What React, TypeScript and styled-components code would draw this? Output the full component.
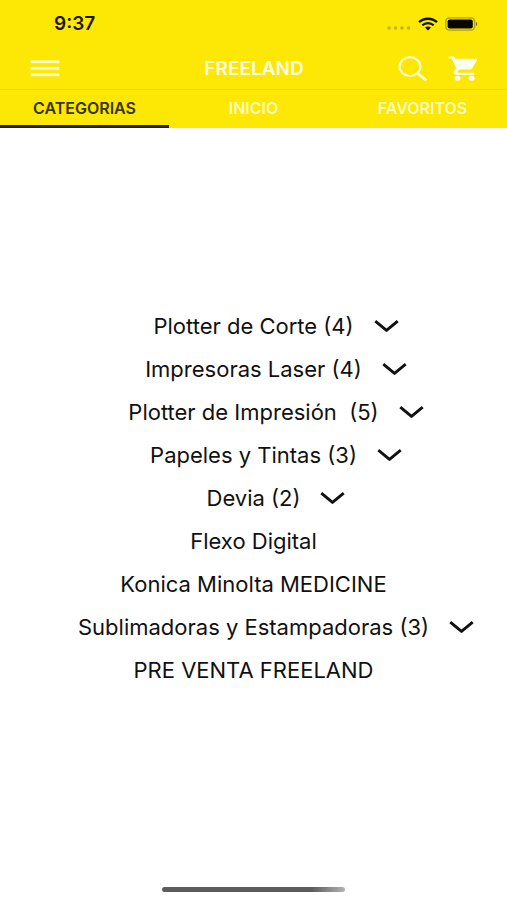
import React, { useState } from "react";
import styled, { createGlobalStyle } from "styled-components";

const GlobalStyle = createGlobalStyle`
  * { box-sizing: border-box; }
  body {
    margin: 0;
    background: #fff;
    font-family: Inter, "Liberation Sans", sans-serif;
    color: #111;
  }
  button {
    border: 0;
    padding: 0;
    background: none;
    font: inherit;
    color: inherit;
    cursor: pointer;
  }
`;

const Screen = styled.div`
  min-height: 100vh;
  display: flex;
  flex-direction: column;
`;

const Header = styled.header`
  background: #fde705;
`;

const StatusBar = styled.div`
  display: flex;
  align-items: center;
  justify-content: space-between;
  height: 48px;
  padding: 0 29px 0 54px;
`;

const Clock = styled.time`
  font-size: 19px;
  font-weight: 600;
  line-height: 24px;
  color: #1a1804;
`;

const StatusIcons = styled.div`
  display: flex;
  align-items: center;
  gap: 7px;
`;

const Toolbar = styled.div`
  display: grid;
  grid-template-columns: 1fr auto 1fr;
  align-items: center;
  height: 42px;
  padding: 0 29px 0 30px;
  border-bottom: 1px solid #ecd508;
`;

const Title = styled.h1`
  margin: 0;
  font-size: 19px;
  font-weight: 600;
  line-height: 24px;
  color: #fffde0;
`;

const IconButton = styled.button`
  display: flex;
  justify-self: start;
`;

const Actions = styled.div`
  display: flex;
  align-items: center;
  justify-content: flex-end;
  gap: 20px;
`;

const Tabs = styled.nav`
  display: grid;
  grid-template-columns: repeat(3, 1fr);
`;

const Tab = styled.button<{ $active: boolean }>`
  height: 38px;
  padding-top: 1px;
  border-bottom: 3px solid ${(p) => (p.$active ? "#22222e" : "transparent")};
  font-size: 16px;
  font-weight: 600;
  line-height: 20px;
  color: ${(p) => (p.$active ? "#38340c" : "#fffbb8")};
`;

const Main = styled.main`
  flex: 1;
  display: flex;
  flex-direction: column;
  justify-content: center;
`;

const CategoryList = styled.ul`
  margin: 0;
  padding: 0;
  list-style: none;
`;

const CategoryRow = styled.li`
  display: grid;
  grid-template-columns: 1fr auto 1fr;
  align-items: center;
  height: 43px;
`;

const CategoryName = styled.button`
  grid-column: 2;
  font-size: 22px;
  line-height: 28px;
  white-space: pre;
`;

const ExpandButton = styled.button`
  display: flex;
  justify-self: start;
  margin-left: 20px;
`;

const Footer = styled.footer`
  display: flex;
  justify-content: center;
  height: 33px;
  padding-top: 20px;
`;

const HomeIndicator = styled.div`
  width: 36%;
  height: 5px;
  border-radius: 3px;
  background: linear-gradient(90deg, #5c5c5c 82%, #b4b4b4);
`;

const SignalDots = () => (
  <svg width="24" height="14" viewBox="0 0 24 14" fill="#c7b40c" aria-hidden="true">
    <circle cx="2" cy="11" r="1.8" />
    <circle cx="8.5" cy="11" r="1.8" />
    <circle cx="15" cy="11" r="1.8" />
    <circle cx="21.5" cy="11" r="1.8" />
  </svg>
);

const Wifi = () => (
  <svg width="20" height="14" viewBox="0 0 20 14" fill="none" stroke="#100f00" aria-hidden="true">
    <path d="M1 5.2C6 .5 14 .5 19 5.2" strokeWidth="2.4" />
    <path d="M4.3 8.3c3.3-3 8.1-3 11.4 0" strokeWidth="2.2" />
    <path d="M7 10.6c1.8-1.6 4.2-1.6 6 0l-3 2.9z" fill="#100f00" stroke="none" />
  </svg>
);

const Battery = () => (
  <svg width="33" height="14" viewBox="0 0 33 14" aria-hidden="true">
    <rect x="0.8" y="0.8" width="28.8" height="12.4" rx="3.6" fill="none" stroke="#ad9e0c" strokeWidth="1.3" />
    <rect x="2.6" y="2.5" width="25.2" height="9" rx="2" fill="#080800" />
    <path d="M31 5c1.7.7 1.7 3.3 0 4z" fill="#6e6508" />
  </svg>
);

const MenuIcon = () => (
  <svg width="30" height="18" viewBox="0 0 30 18" fill="#fffdd0" aria-hidden="true">
    <rect x="0.5" y="0.4" width="29" height="2.8" />
    <rect x="0.5" y="6.9" width="29" height="2.8" />
    <rect x="0.5" y="13.4" width="29" height="2.8" />
  </svg>
);

const SearchIcon = () => (
  <svg width="30" height="26" viewBox="0 0 30 26" fill="none" stroke="#fffdd0" strokeWidth="2.2" aria-hidden="true">
    <ellipse cx="12" cy="10.6" rx="10.4" ry="9.4" />
    <path d="M19.4 17.2 28.4 24.4" strokeWidth="2.7" />
  </svg>
);

const CartIcon = () => (
  <svg width="30" height="26" viewBox="0 0 30 26" fill="#fffff0" aria-hidden="true">
    <path d="M.8.4h5.1l1.6 2.4h20.3c1.1 0 1.7.9 1.1 1.8l-4.8 7.7c-.5.8-1.4 1.3-2.5 1.3H11l-1.5 2.4c-.2.4 0 .7.5.7h16.2v2.2H8.7c-2.3 0-3.6-1.9-2.6-3.7l2.1-3.2L3.7 2.6H.8z" />
    <ellipse cx="9.5" cy="22.2" rx="3" ry="2.5" />
    <ellipse cx="23.7" cy="22.2" rx="3" ry="2.5" />
  </svg>
);

const Chevron = () => (
  <svg width="25" height="14" viewBox="0 0 25 14" fill="none" stroke="#111" strokeWidth="2.9" aria-hidden="true">
    <path d="M1.3 2.2 12.5 11.4 23.7 2.2" strokeLinejoin="round" />
  </svg>
);

const tabs = ["CATEGORIAS", "INICIO", "FAVORITOS"];

const categories = [
  { name: "Plotter de Corte (4)", expandable: true },
  { name: "Impresoras Laser (4)", expandable: true },
  { name: "Plotter de Impresión  (5)", expandable: true },
  { name: "Papeles y Tintas (3)", expandable: true },
  { name: "Devia (2)", expandable: true },
  { name: "Flexo Digital", expandable: false },
  { name: "Konica Minolta MEDICINE", expandable: false },
  { name: "Sublimadoras y Estampadoras (3)", expandable: true },
  { name: "PRE VENTA FREELAND", expandable: false },
];

export default function App() {
  const [activeTab, setActiveTab] = useState(tabs[0]);

  return (
    <Screen>
      <GlobalStyle />
      <Header>
        <StatusBar>
          <Clock>9:37</Clock>
          <StatusIcons>
            <SignalDots />
            <Wifi />
            <Battery />
          </StatusIcons>
        </StatusBar>
        <Toolbar>
          <IconButton aria-label="Menú">
            <MenuIcon />
          </IconButton>
          <Title>FREELAND</Title>
          <Actions>
            <IconButton aria-label="Buscar">
              <SearchIcon />
            </IconButton>
            <IconButton aria-label="Carrito">
              <CartIcon />
            </IconButton>
          </Actions>
        </Toolbar>
        <Tabs>
          {tabs.map((tab) => (
            <Tab
              key={tab}
              $active={tab === activeTab}
              aria-current={tab === activeTab ? "page" : undefined}
              onClick={() => setActiveTab(tab)}
            >
              {tab}
            </Tab>
          ))}
        </Tabs>
      </Header>
      <Main>
        <CategoryList>
          {categories.map(({ name, expandable }) => (
            <CategoryRow key={name}>
              <CategoryName>{name}</CategoryName>
              {expandable && (
                <ExpandButton aria-label={`Desplegar ${name}`}>
                  <Chevron />
                </ExpandButton>
              )}
            </CategoryRow>
          ))}
        </CategoryList>
      </Main>
      <Footer>
        <HomeIndicator />
      </Footer>
    </Screen>
  );
}
